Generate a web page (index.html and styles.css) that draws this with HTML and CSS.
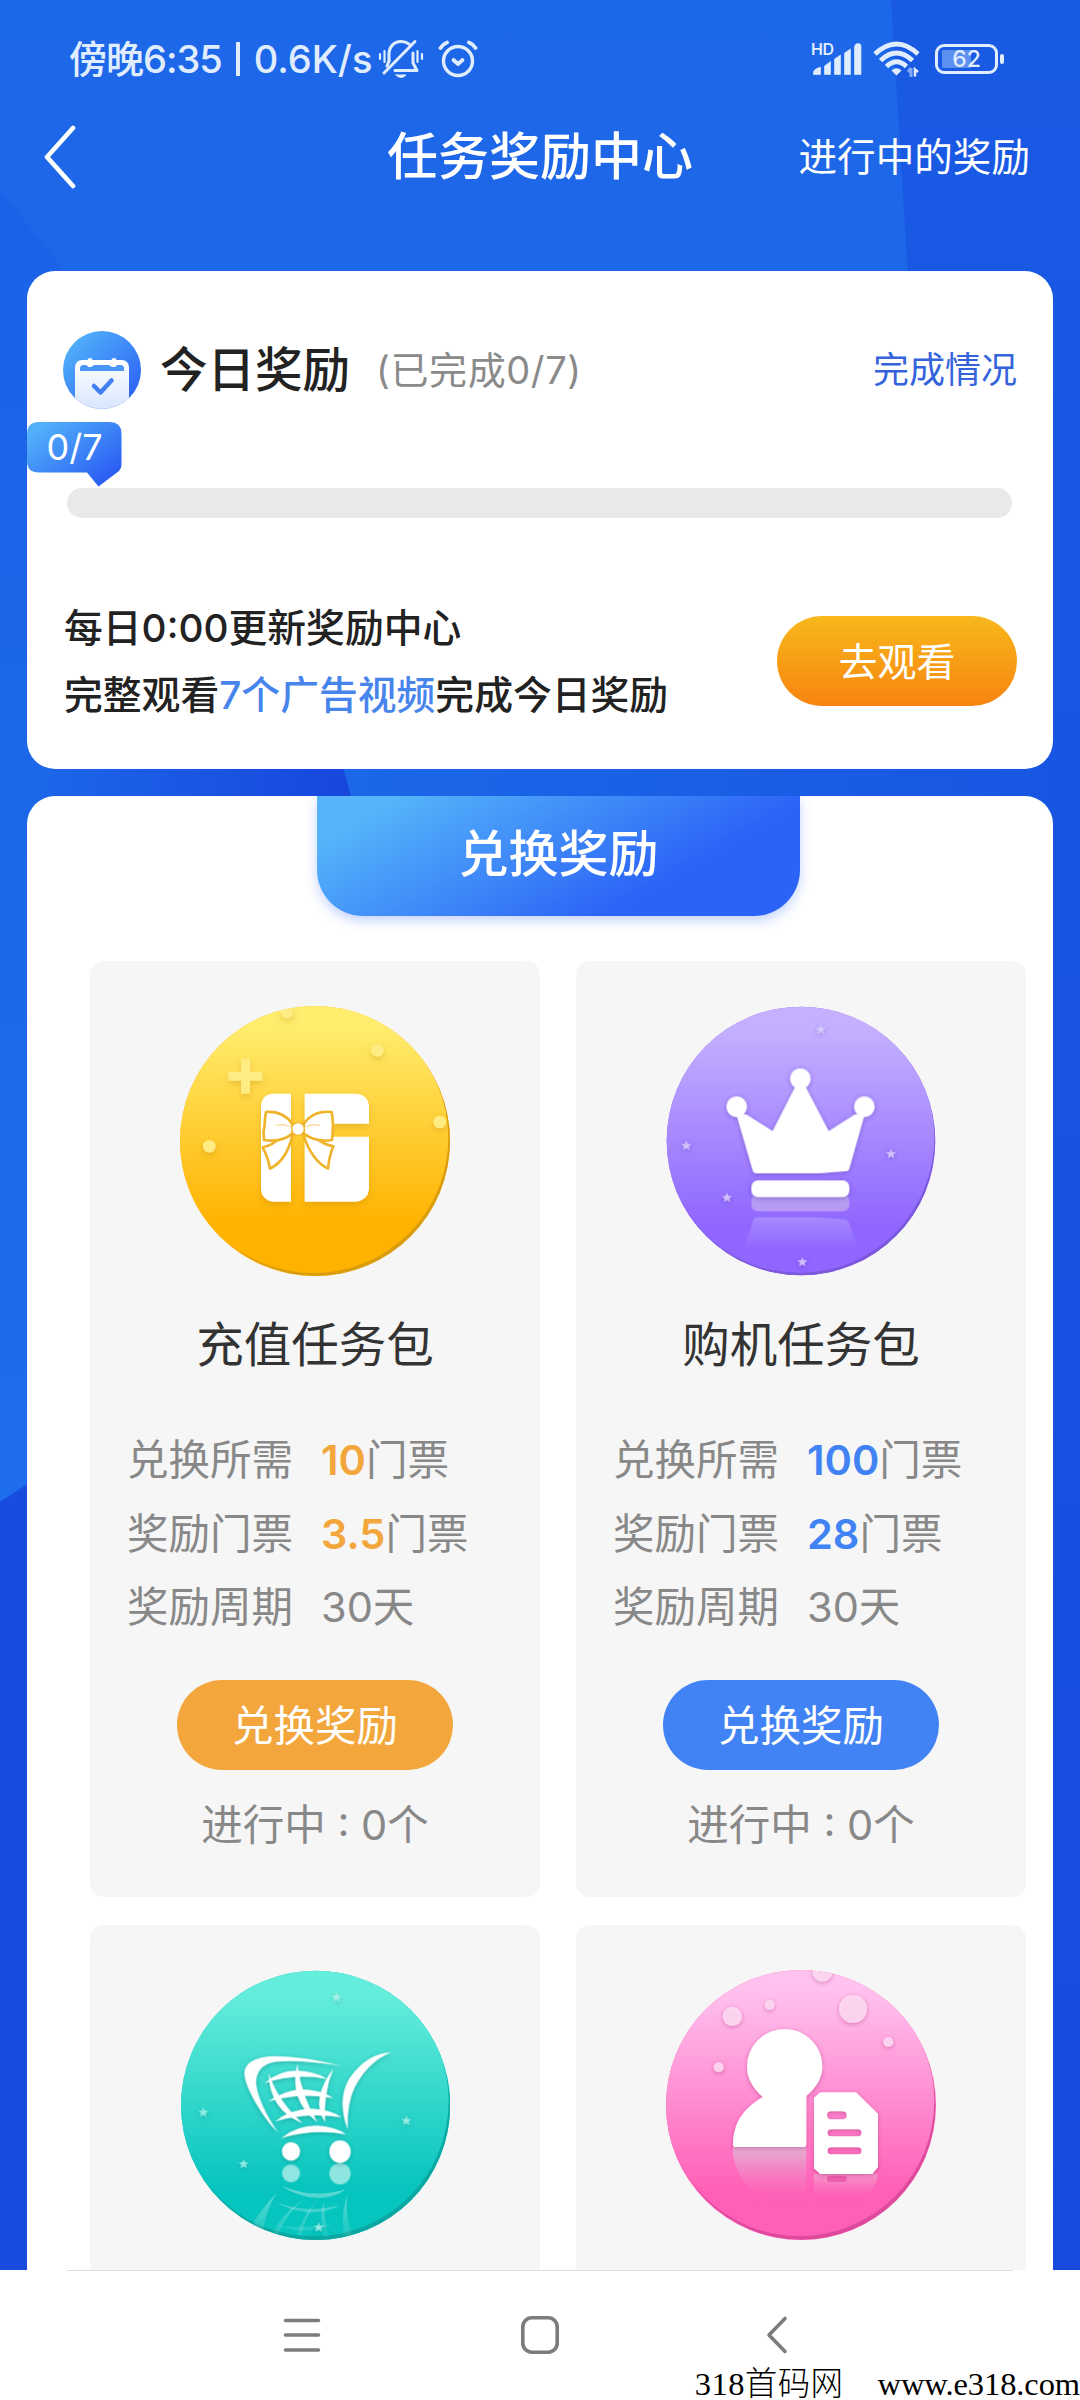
FILE: index.html
```html
<!DOCTYPE html>
<html lang="zh-CN">
<head>
<meta charset="utf-8">
<title>任务奖励中心</title>
<link rel="stylesheet" href="styles.css">
</head>
<body>
<div class="screen">
  <svg class="backdrop" viewBox="0 0 1080 2270" aria-hidden="true">
    <defs>
      <linearGradient id="bgMain" x1="0" y1="0" x2="0" y2="1"><stop offset="0" stop-color="#1d68e8"/><stop offset=".35" stop-color="#1c63e8"/><stop offset="1" stop-color="#1b60e8"/></linearGradient>
      <linearGradient id="bgLeft" x1="0" y1="0" x2="0" y2="1"><stop offset="0" stop-color="#1b62e6"/><stop offset="1" stop-color="#1e6dec"/></linearGradient>
      <linearGradient id="bgRight" x1="0" y1="0" x2="0" y2="1"><stop offset="0" stop-color="#195ae3"/><stop offset="1" stop-color="#164adf"/></linearGradient>
      <linearGradient id="bgFacet" x1="0" y1="0" x2="1" y2="0"><stop offset="0" stop-color="#1c65e8"/><stop offset="1" stop-color="#1746dd"/></linearGradient>
      <linearGradient id="bgGap" x1="0" y1="0" x2="1" y2="0"><stop offset="0" stop-color="#1c68e8"/><stop offset="1" stop-color="#1856e1"/></linearGradient>
    </defs>
    <rect width="1080" height="2270" fill="url(#bgMain)"/>
    <path d="M0 190 60 265V1480L0 1500Z" fill="url(#bgLeft)"/>
    <path d="M891 0 907 260 940 700 1040 2270H1080V0Z" fill="url(#bgRight)"/>
    <rect x="330" y="740" width="723" height="80" fill="url(#bgGap)"/>
    <path d="M50 740H335L355 810H50Z" fill="url(#bgFacet)"/>
    <path d="M0 1502 40 1476V2270H0Z" fill="#174cdf"/>
  </svg>

  <header class="status">
    <div class="status-left">
      <span class="status-text">傍晚6:35<i class="bar"></i><span class="speed">0.6K/s</span></span>
      <svg class="ic-bell" viewBox="0 0 46 40" fill="none" stroke="#e0edff" stroke-width="3" stroke-linecap="round" stroke-linejoin="round">
        <path d="M11 22V15C11 8 16 2.500 23 2.500 26 2.500 29 3.500 31 5M35 14V24L39 31.500H17M37 2.500 6 34" /><path d="M11 22 9 27"/><path d="M18 36H28Q23 41 18 36Z" fill="#e0edff" stroke-width="1"/><path d="M2 15V20M6.500 12V23M39.500 12V23M44 15V20" stroke-width="2.200"/>
      </svg>
      <svg class="ic-alarm" viewBox="0 0 40 40" fill="none" stroke="#e0edff" stroke-width="3.400" stroke-linecap="round" stroke-linejoin="round">
        <circle cx="20" cy="22" r="14.500"/><path d="M15.500 21 20 25 24.500 21" stroke-width="3.800"/><path d="M2.500 9Q5 5 9 3.500M37.500 9Q35 5 31 3.500" stroke-width="3.800"/>
      </svg>
    </div>
    <div class="status-right">
      <svg class="ic-signal" viewBox="0 -6 52 42" fill="#e0edff">
        <text x="0" y="14" font-size="16" font-weight="600" textLength="23" class="hd">HD</text>
        <path d="M2.500 33.500V31Q3 28 9.500 26V33.500ZM13.500 33.500V25L19.500 20.500V33.500ZM23.500 33.500V18L29.500 14V33.500ZM33.500 33.500V12L39.500 8V33.500ZM43.500 33.500V6Q44 2.500 47 2.500T50 5V33.500Z" stroke="#e0edff" stroke-width=".6"/>
      </svg>
      <svg class="ic-wifi" viewBox="0 0 48 38" fill="none" stroke="#e0edff" stroke-width="4.800">
        <path d="M2 14Q23.500-6 45 14M7.500 20.500Q23.500 5.500 39.500 20.500M13.500 26.500Q23.500 17 33.500 26.500"/><path d="M18.500 30.500Q23.500 26 28.500 30.500L23.500 35.500Z" fill="#e0edff" stroke="none"/><path d="M38 28V37M38 28 35 32" stroke="#7fa9f5" stroke-width="3"/><path d="M42 36.500V29.500L45 32" stroke-width="2.500"/>
      </svg>
      <div class="battery"><span>62</span></div>
    </div>
  </header>

  <nav class="topbar">
    <svg class="back" viewBox="0 0 34 64" fill="none" stroke="#fff" stroke-width="4.600" stroke-linecap="round" stroke-linejoin="round"><path d="M30 3 4 32 30 61"/></svg>
    <h1>任务奖励中心</h1>
    <a class="ongoing">进行中的奖励</a>
  </nav>

  <section class="today">
    <div class="today-head">
      <svg class="cal" viewBox="0 0 78 78">
        <defs>
          <linearGradient id="calBg" x1=".2" y1=".1" x2=".9" y2=".8"><stop offset="0" stop-color="#4fadf9"/><stop offset="1" stop-color="#2f66f5"/></linearGradient>
          <linearGradient id="calFg" x1="0" y1="0" x2="0" y2="1"><stop offset="0" stop-color="#fff"/><stop offset="1" stop-color="#cfe0fd"/></linearGradient>
          <clipPath id="calClip"><circle cx="39" cy="39" r="39"/></clipPath>
        </defs>
        <g clip-path="url(#calClip)">
          <rect width="78" height="78" fill="url(#calBg)"/>
          <rect x="12" y="29" width="54" height="60" rx="7" fill="url(#calFg)"/>
          <path d="M17 40V37Q17 34 21 34H23Q27 38 31 34H46Q50 38 54 34H57Q61 34 61 37V40Z" fill="#4b94f8"/>
          <rect x="24.500" y="27" width="5" height="9" rx="2.500" fill="#fff"/><rect x="48.500" y="27" width="5" height="9" rx="2.500" fill="#fff"/>
          <path d="M31 55 37.500 61.500 48.500 49.500" fill="none" stroke="#417ff2" stroke-width="4.500" stroke-linecap="round" stroke-linejoin="round"/>
        </g>
      </svg>
      <h2>今日奖励</h2>
      <span class="done">(已完成0/7)</span>
      <a class="detail">完成情况</a>
    </div>
    <div class="progress">
      <div class="bubble">
        <svg viewBox="0 0 95 65"><defs><linearGradient id="bub" x1="0" y1="0" x2="1" y2=".9"><stop offset=".1" stop-color="#53b1fb"/><stop offset=".9" stop-color="#2b5ff3"/></linearGradient></defs><path d="M12 0H82Q94.500 0 94.500 12V43Q94.500 46 92 49L71.500 64.500 60 50.500H12Q0 50.500 0 39V12Q0 0 12 0Z" fill="url(#bub)"/></svg>
        <span>0/7</span>
      </div>
      <div class="track"></div>
    </div>
    <div class="today-foot">
      <div class="tips">
        <p>每日0:00更新奖励中心</p>
        <p>完整观看<em>7个广告视频</em>完成今日奖励</p>
      </div>
      <button class="watch">去观看</button>
    </div>
  </section>

  <section class="exchange">
    <h2 class="tab">兑换奖励</h2>
    <div class="grid">
      <article class="pack gold">
        <svg class="badge" viewBox="90 76 810 810">
          <defs>
            <linearGradient id="gY" x1="0" y1="0" x2="0" y2="1"><stop offset=".08" stop-color="#ffed6e"/><stop offset=".82" stop-color="#ffb200"/></linearGradient>
            <filter id="soft" x="-30%" y="-30%" width="160%" height="160%"><feDropShadow dx="0" dy="10" stdDeviation="9" flood-color="#b87800" flood-opacity=".28"/></filter>
            <clipPath id="cY"><circle cx="495" cy="481" r="405"/></clipPath>
          </defs>
          <circle cx="495" cy="481" r="405" fill="#ffb91a"/>
          <g clip-path="url(#cY)">
            <circle cx="500" cy="484" r="402" fill="#d99c0c"/>
            <circle cx="490" cy="472" r="405" fill="url(#gY)"/>
            <g fill="#ffec82" filter="url(#soft)"><circle cx="411" cy="94" r="19"/><circle cx="682" cy="209" r="19"/><circle cx="869" cy="424" r="19"/><circle cx="178" cy="497" r="19"/><path d="M273 234H300V273H337V300H300V339H273V300H235V273H273Z"/></g>
            <g filter="url(#soft)"><path fill="#fff" d="M333 375Q337 339 371 339H423V663H371Q337 660 333 627ZM464 339H615Q654 341 657 377V429H464ZM464 468H657V627Q652 660 615 663H464Z"/></g>
          </g>
          <g fill="#fff" stroke="#efb42c" stroke-width="8" stroke-linejoin="round">
            <path d="M428 462Q410 540 360 564 354 530 338 500 374 490 385 474ZM460 462Q485 540 534 564 538 525 550 497 515 490 503 474Z"/>
            <path d="M427 430Q400 390 348 394 344 415 344 432 338 455 342 478 398 486 428 458ZM461 430Q490 388 545 394 552 432 546 478 494 486 461 458Z"/>
            <circle cx="444" cy="445" r="19" stroke-width="4"/>
            <path d="M422 438Q398 428 378 434M467 438Q488 428 510 434" stroke-width="2" fill="none"/>
          </g>
        </svg>
        <h3>充值任务包</h3>
        <dl><dt>兑换所需</dt><dd><b>10</b>门票</dd><dt>奖励门票</dt><dd><b>3.5</b>门票</dd><dt>奖励周期</dt><dd>30天</dd></dl>
        <button>兑换奖励</button>
        <p class="running">进行中 : 0个</p>
      </article>

      <article class="pack blue">
        <svg class="badge" viewBox="78 77 810 810">
          <defs>
            <linearGradient id="gP" x1="0" y1="0" x2="0" y2="1"><stop offset=".1" stop-color="#c4b0ff"/><stop offset=".83" stop-color="#8f66ff"/></linearGradient>
            <linearGradient id="fadeP" gradientUnits="userSpaceOnUse" x1="0" y1="705" x2="0" y2="810"><stop offset="0" stop-color="#fff" stop-opacity=".24"/><stop offset="1" stop-color="#fff" stop-opacity="0"/></linearGradient>
            <filter id="softP" x="-20%" y="-20%" width="140%" height="140%"><feDropShadow dx="0" dy="3" stdDeviation="6" flood-color="#5030a8" flood-opacity=".5"/></filter>
            <clipPath id="cP"><circle cx="483" cy="482" r="403"/></clipPath>
            <path id="star" d="M0-15 4-5 15-4.500 6.500 2.500 9.500 13 0 7-9.500 13-6.500 2.500-15-4.500-4-5Z"/>
          </defs>
          <circle cx="483" cy="482" r="403" fill="#8e67f5"/>
          <g clip-path="url(#cP)"><circle cx="484" cy="485" r="401" fill="#7d58dd"/><circle cx="478" cy="472" r="405" fill="url(#gP)"/></g>
          <g fill="#dccffe" fill-opacity=".85" filter="url(#softP)"><use href="#star" x="542" y="148"/><use href="#star" x="139" y="496"/><use href="#star" x="753" y="521"/><use href="#star" x="261" y="652"/><use href="#star" x="487" y="845"/></g>
          <rect x="334" y="640" width="294" height="53" rx="20" fill="#b79bf2"/>
          <path d="M350 711H535L610 717Q625 718 630 735L655 810H310L338 725Q342 711 350 711Z" fill="url(#fadeP)"/>
          <g fill="#fff" filter="url(#softP)">
            <circle cx="290" cy="379" r="31"/><circle cx="481" cy="295" r="31"/><circle cx="673" cy="379" r="31"/>
            <path d="M290 405 318 402 398 452 465 320H497L566 452 645 402 673 405 628 565Q626 574 612 573L535 579H350Q340 579 338 570Z"/>
            <rect x="334" y="600" width="294" height="50" rx="20"/>
          </g>
        </svg>
        <h3>购机任务包</h3>
        <dl><dt>兑换所需</dt><dd><b>100</b>门票</dd><dt>奖励门票</dt><dd><b>28</b>门票</dd><dt>奖励周期</dt><dd>30天</dd></dl>
        <button>兑换奖励</button>
        <p class="running">进行中 : 0个</p>
      </article>

      <article class="pack">
        <svg class="badge" viewBox="90 90 810 810">
          <defs>
            <linearGradient id="gT" x1="0" y1="0" x2="0" y2="1"><stop offset=".1" stop-color="#65eddb"/><stop offset=".83" stop-color="#06c4be"/></linearGradient>
            <filter id="softT" x="-20%" y="-20%" width="140%" height="140%"><feDropShadow dx="0" dy="4" stdDeviation="7" flood-color="#006b68" flood-opacity=".4"/></filter>
            <clipPath id="cT"><circle cx="497" cy="496" r="404"/></clipPath>
            <linearGradient id="fadeT" gradientUnits="userSpaceOnUse" x1="0" y1="735" x2="0" y2="900"><stop offset="0" stop-color="#fff" stop-opacity=".38"/><stop offset="1" stop-color="#fff" stop-opacity=".05"/></linearGradient>
          </defs>
          <circle cx="497" cy="496" r="404" fill="#18c8c2"/>
          <g clip-path="url(#cT)"><circle cx="498" cy="499" r="402" fill="#0ba8a3"/><circle cx="491" cy="484" r="405" fill="url(#gT)"/>
            <g fill="url(#fadeT)">
              <path d="M396 738Q490 778 588 748 555 774 502 774 440 770 396 738ZM378 760Q330 815 308 850L340 870Q345 820 378 760ZM592 766Q572 820 582 885H604Q586 820 592 766ZM378 787Q465 822 568 796 535 818 480 818 425 814 378 787ZM362 852Q440 870 546 852 500 876 440 872Z"/>
              <path d="M456 782Q395 820 366 885H384Q410 820 456 782ZM500 782Q456 830 440 885H455Q470 820 500 782ZM522 785Q506 830 522 890H534Q522 830 522 785Z"/>
            </g>
          </g>
          <g fill="#b5f7ee" fill-opacity=".75" filter="url(#softT)"><use href="#star" x="560" y="172"/><use href="#star" x="160" y="517"/><use href="#star" x="769" y="542"/><use href="#star" x="281" y="672"/><use href="#star" x="506" y="862"/></g>
          <g fill="#8fe5df"><circle cx="423" cy="700" r="27"/><circle cx="570" cy="701" r="32"/></g>
          <g fill="#fff" filter="url(#softT)">
            <path d="M384 578Q350 545 318 490 283 430 283 398 287 352 372 348 460 348 578 378 450 358 378 365 318 374 318 430 325 490 384 578Z"/>
            <path d="M724 336Q650 340 598 415 560 480 593 568 590 490 615 440 654 365 724 336Z"/>
            <path d="M394 594Q440 556 504 557 555 560 588 583 490 566 394 594Z"/>
            <path d="M343 430Q385 392 440 392 495 394 533 417 430 398 343 430ZM354 485Q400 450 460 448 520 452 550 474 445 457 354 485ZM376 544Q420 508 485 506 545 510 574 532 475 516 376 544Z"/>
            <path d="M356 400Q358 510 458 550 385 485 356 400ZM442 372Q415 480 502 546 455 470 442 372ZM550 386Q480 480 525 546 520 460 550 386Z"/>
            <ellipse cx="423" cy="634" rx="27" ry="28"/><ellipse cx="570" cy="635" rx="32" ry="34"/>
          </g>
        </svg>
      </article>

      <article class="pack">
        <svg class="badge" viewBox="78 89 810 810">
          <defs>
            <linearGradient id="gK" x1="0" y1="0" x2="0" y2="1"><stop offset=".08" stop-color="#ffc2ef"/><stop offset=".84" stop-color="#ff5fb6"/></linearGradient>
            <filter id="softK" x="-20%" y="-20%" width="140%" height="140%"><feDropShadow dx="0" dy="4" stdDeviation="6" flood-color="#a02870" flood-opacity=".45"/></filter>
            <clipPath id="cK"><circle cx="483" cy="494" r="405"/></clipPath>
            <linearGradient id="fadeK" gradientUnits="userSpaceOnUse" x1="0" y1="622" x2="0" y2="800"><stop offset="0" stop-color="#e3b0d2"/><stop offset="1" stop-color="#ff62b7" stop-opacity="0"/></linearGradient>
            <linearGradient id="fadeK2" gradientUnits="userSpaceOnUse" x1="0" y1="700" x2="0" y2="785"><stop offset="0" stop-color="#f39ccc"/><stop offset="1" stop-color="#ff62b7" stop-opacity="0"/></linearGradient>
          </defs>
          <circle cx="483" cy="494" r="405" fill="#ff66ba"/>
          <g clip-path="url(#cK)"><circle cx="484" cy="496" r="402" fill="#dd4a9c"/><circle cx="478" cy="482" r="405" fill="url(#gK)"/>
            <g fill="#ffdcf4" fill-opacity=".85" filter="url(#softK)"><circle cx="277" cy="228" r="29"/><circle cx="389" cy="194" r="15"/><circle cx="547" cy="94" r="30"/><circle cx="639" cy="206" r="42"/><circle cx="745" cy="305" r="15"/><circle cx="236" cy="381" r="15"/></g>
          </g>
          <path d="M279 620H499V800H340L368 768Q290 725 279 640Z" fill="url(#fadeK)"/>
          <path d="M522 700H713Q712 730 690 752L655 785H540Q522 780 522 760Z" fill="url(#fadeK2)"/>
          <rect x="561" y="706" width="59" height="19" rx="9" fill="#ec5fae"/>
          <g fill="#fff" filter="url(#softK)">
            <path d="M368 470C335 440 321 412 321 378A113 112 0 0 1 547 378C547 412 530 442 499 467V612Q499 620 492 620H286Q279 620 279 612C281 545 310 505 368 470Z"/>
            <path fill-rule="evenodd" d="M541 456H648L714 520V680L697 701H541L522 684V472ZM573 513A12 12 0 0 0 573 537H608A12 12 0 0 0 608 513ZM573 567A10 10 0 0 0 573 588H654A10 10 0 0 0 654 567ZM573 621A10 10 0 0 0 573 642H654A10 10 0 0 0 654 621Z"/>
          </g>
        </svg>
      </article>
    </div>
  </section>
</div>

<footer class="sysnav">
  <div class="rule"></div>
  <div class="keys">
    <svg viewBox="0 0 40 40" fill="none" stroke="#7c7c7c" stroke-width="3.600" stroke-linecap="round"><path d="M3.500 5.500H36.500M3.500 20H36.500M3.500 35H36.500"/></svg>
    <svg viewBox="0 0 40 40" fill="none" stroke="#7c7c7c" stroke-width="3.600"><rect x="2.800" y="2.800" width="34.400" height="34.400" rx="9"/></svg>
    <svg viewBox="0 0 40 40" fill="none" stroke="#7c7c7c" stroke-width="3.600" stroke-linecap="round" stroke-linejoin="round"><path d="M28 3.500 12 20 28 36.500"/></svg>
  </div>
  <p class="mark"><span>318首码网</span><span class="url">www.e318.com</span></p>
</footer>
</body>
</html>
```
FILE: styles.css
```css
* { box-sizing: border-box; margin: 0; padding: 0; }

body {
  width: 1080px;
  height: 2400px;
  overflow: hidden;
  display: flex;
  flex-direction: column;
  background: #fff;
  font-family: Inter, "Noto Sans CJK SC", sans-serif;
  color: #222;
}

button { border: 0; font: inherit; color: #fff; }
h1, h2, h3 { font-weight: 500; }
svg { display: block; flex: none; }

.screen {
  position: relative;
  flex: none;
  height: 2270px;
  overflow: hidden;
  display: flex;
  flex-direction: column;
  padding: 0 27px;
}
.backdrop { position: absolute; left: 0; top: 0; width: 1080px; height: 2270px; }
.screen > :not(.backdrop) { position: relative; flex: none; }

/* status bar */
.status {
  display: flex;
  justify-content: space-between;
  align-items: center;
  height: 118px;
  padding: 0 49px 0 42px;
  color: #e0edff;
}
.status-left, .status-right { display: flex; align-items: center; }
.status-text { display: flex; align-items: center; font-size: 38px; font-weight: 500; line-height: 60px; letter-spacing: -1px; }
.bar { width: 4px; height: 34px; margin: 0 14px 0 14px; background: #e0edff; }
.speed { letter-spacing: 0; }
.ic-bell { width: 46px; height: 40px; margin-left: 6px; }
.ic-alarm { width: 40px; height: 40px; margin-left: 14px; }
.ic-signal { width: 52px; height: 42px; margin-top: -6px; }
.ic-wifi { width: 48px; height: 38px; margin-left: 10px; }
.hd { font-family: Inter, sans-serif; }
.battery {
  position: relative;
  width: 63px;
  height: 30px;
  margin: 0 6px 0 14px;
  border: 3px solid #e0edff;
  border-radius: 9px;
  background: linear-gradient(#5b8ff0, #5b8ff0) 4px 3px / 29px 18px no-repeat;
  font-size: 23px;
  font-weight: 500;
  line-height: 24px;
  text-align: center;
}
.battery::after { content: ""; position: absolute; right: -9px; top: 7px; width: 4px; height: 10px; border-radius: 2px; background: #e0edff; }

/* title bar */
.topbar {
  display: grid;
  grid-template-columns: 1fr auto 1fr;
  align-items: center;
  height: 78px;
  color: #fff;
}
.back { width: 34px; height: 64px; margin-left: 16px; }
.topbar h1 { font-size: 51px; line-height: 78px; }
.ongoing { justify-self: end; margin-right: 23px; font-size: 38.6px; line-height: 74px; }

/* daily card */
.today {
  height: 498px;
  margin-top: 75px;
  padding: 60px 36px 0;
  border-radius: 28px;
  background: #fff;
}
.today-head { display: flex; align-items: center; height: 78px; }
.cal { width: 78px; height: 78px; }
.today-head h2 { margin-left: 19px; font-size: 47.5px; line-height: 76px; }
.done { margin-left: 26px; font-size: 38px; letter-spacing: .6px; line-height: 76px; color: #8a8a8a; }
.detail { margin-left: auto; font-size: 36px; line-height: 76px; color: #3463dc; }
.progress { position: relative; margin: 79px 5px 0 4px; }
.track { height: 30px; border-radius: 15px; background: #e9e9e9; }
.bubble { position: absolute; left: -40px; top: -66px; width: 95px; height: 65px; color: #fff; }
.bubble svg { width: 95px; height: 65px; }
.bubble span { position: absolute; inset: 0 0 15px; font-size: 36px; line-height: 51px; text-align: center; }
.today-foot { display: flex; justify-content: space-between; align-items: flex-start; margin-top: 76px; }
.tips { padding-left: 1px; font-size: 38.8px; font-weight: 500; line-height: 67px; }
.tips em { font-style: normal; color: #4784ec; }
.watch {
  width: 240px;
  height: 90px;
  margin-top: 22px;
  padding-bottom: 4px;
  border-radius: 45px;
  background: linear-gradient(#f8b81c, #f78410);
  font-size: 39px;
}

/* exchange card */
.exchange {
  height: 1600px;
  margin-top: 27px;
  padding-left: 63px;
  border-radius: 28px;
  background: #fff;
}
.tab {
  width: 483px;
  height: 120px;
  margin-left: 227px;
  border-radius: 0 0 46px 46px;
  background: linear-gradient(150deg, #55b4fa 12%, #2b63f6 72%);
  box-shadow: 0 5px 12px rgba(43, 99, 246, .28);
  clip-path: inset(0 -20px -20px);
  color: #fff;
  font-size: 50px;
  line-height: 117px;
  text-align: center;
}
.grid { display: grid; grid-template-columns: 450px 450px; grid-auto-rows: 936px; gap: 28px 36px; margin-top: 45px; }
.pack {
  display: flex;
  flex-direction: column;
  align-items: center;
  padding-top: 45px;
  border-radius: 14px;
  background: #f6f6f6;
  color: #888;
  font-size: 41.5px;
}
.badge { width: 270px; height: 270px; }
.pack h3 { margin-top: 36px; font-size: 47.5px; font-weight: 400; line-height: 66px; color: #333; }
.pack dl { display: grid; grid-template-columns: 194px 1fr; width: 376px; margin-top: 46px; line-height: 73.5px; }
.pack b { font-weight: 600; letter-spacing: 0; }
.gold b { color: #f2a63b; }
.blue b { color: #4183f4; }
.pack button { width: 276px; height: 90px; margin-top: 35px; padding-bottom: 3px; border-radius: 45px; }
.gold button { background: #f2a63b; }
.blue button { background: #4183f4; }
.running { margin-top: 22px; line-height: 66px; }

/* system navigation */
.sysnav { flex: none; height: 130px; background: #fff; display: flex; flex-direction: column; }
.rule { flex: none; height: 1px; margin: 0 67px; background: #dedede; }
.keys { display: flex; justify-content: space-between; margin: 44px 283px 0 282px; }
.keys svg { width: 40px; height: 40px; }
.mark {
  display: flex;
  justify-content: flex-end;
  gap: 34px;
  margin-top: 13px;
  font-family: "Liberation Serif", "Noto Sans CJK SC", serif;
  font-size: 32.5px;
  font-weight: 300;
  line-height: 32px;
  color: #000;
  white-space: nowrap;
}
.mark span:first-child { letter-spacing: .4px; }
.url { letter-spacing: -.1px; }
```
